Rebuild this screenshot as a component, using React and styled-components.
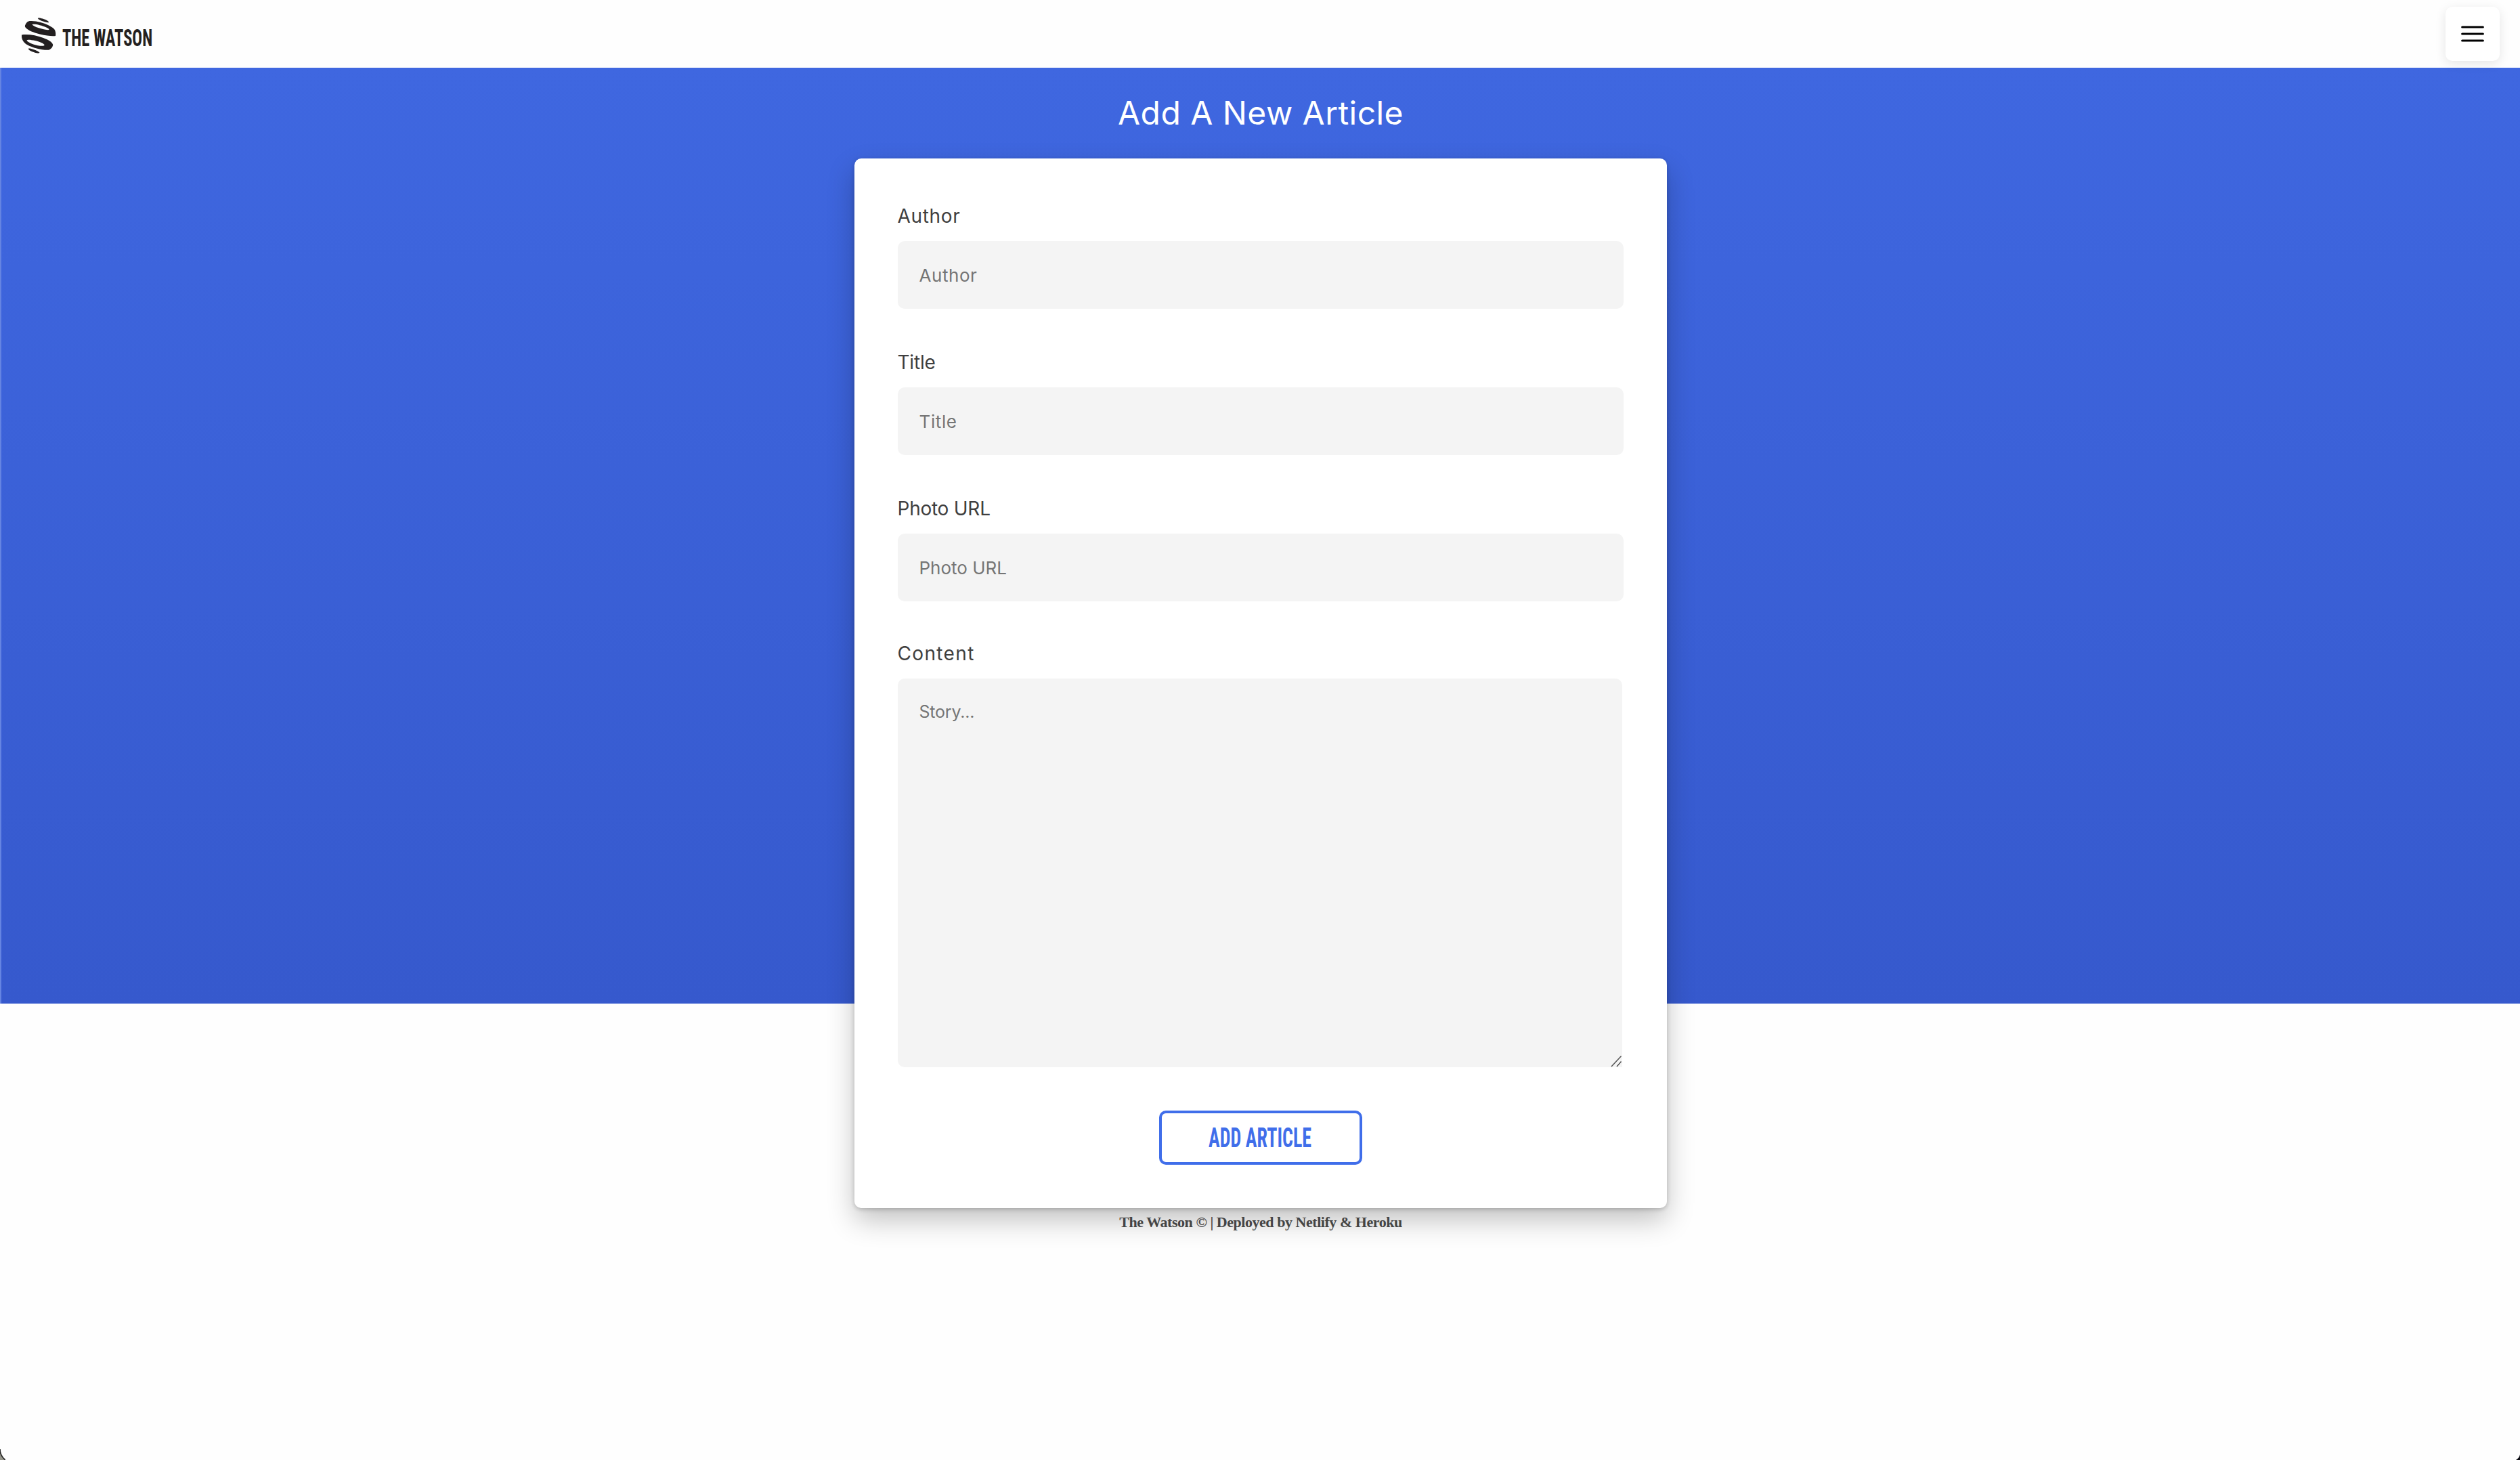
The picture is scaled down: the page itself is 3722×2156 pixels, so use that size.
import React from 'react';
import styled, { createGlobalStyle } from 'styled-components';

const colors = {
  blue: '#406eea',
  ink: '#231f20',
  label: '#3f3f3f',
  field: '#f4f4f4',
  placeholder: '#757575',
};

const GlobalStyle = createGlobalStyle`
  * {
    box-sizing: border-box;
  }
  body {
    margin: 0;
    background: #fefefe;
    font-family: Inter, 'Open Sans', sans-serif;
    overflow: hidden;
  }
`
const Page = styled.div`
  position: relative;
  height: 2156px;
`
const Header = styled.header`
  display: flex;
  justify-content: space-between;
  height: 100px;
  padding: 10px 30px 10px 32px;
`
const Brand = styled.a`
  display: flex;
  align-items: flex-start;
  gap: 9px;
  padding-top: 16px;
  color: ${colors.ink};
`
const Condensed = styled.span`
  display: inline-block;
  font-family: 'Roboto Condensed', Roboto, sans-serif;
  font-stretch: 75%;
  font-weight: 700;
  white-space: nowrap;
  transform: scaleX(${p => p.$squeeze});
  transform-origin: ${p => p.$origin};
`
const BrandName = styled(Condensed)`
  margin-top: 10px;
  font-size: 35px;
  line-height: 41px;
`
const MenuButton = styled.button`
  display: flex;
  align-items: center;
  justify-content: center;
  width: 80px;
  height: 80px;
  padding: 0;
  border: 0;
  border-radius: 10px;
  background: #fff;
  box-shadow: 0 4px 16px rgba(0, 0, 0, 0.1);
`
const Hero = styled.main`
  display: flex;
  flex-direction: column;
  align-items: center;
  height: 1382px;
  border-left: 2px solid #6584e2;
  background: linear-gradient(#3f67e0, #3659cd);
`
const Heading = styled.h1`
  margin: 0;
  color: #fff;
  font-size: 48px;
  font-weight: 400;
  line-height: 134px;
  letter-spacing: 0.45px;
`
const Card = styled.form`
  flex: none;
  width: 1200px;
  height: 1550px;
  margin-right: 1px;
  padding: 64px;
  border-radius: 10px;
  background: #fff;
  box-shadow: 0 2px 6px rgba(0, 0, 0, 0.2), 0 18px 40px rgba(0, 0, 0, 0.24);
`
const Field = styled.div`
  margin-bottom: 58px;

  &:nth-of-type(3) {
    margin-bottom: 56px;
  }
  &:last-of-type {
    margin-bottom: 64px;
  }
`
const Label = styled.label`
  display: block;
  margin-bottom: 17px;
  padding-top: 1px;
  color: ${colors.label};
  font-size: 28px;
  line-height: 40px;
  letter-spacing: ${p => p.$tracking}px;
`
const Input = styled.input`
  display: block;
  width: 1072px;
  height: 100px;
  padding: 0 32px;
  border: 0;
  border-radius: 10px;
  background: ${colors.field};
  font-family: inherit;
  font-size: 26px;
  letter-spacing: ${p => p.$tracking}px;

  &::placeholder {
    color: ${colors.placeholder};
  }
`
const StoryBox = styled.div`
  position: relative;
  width: 1070px;
  height: 574px;
`
const Story = styled(Input)`
  width: 100%;
  height: 100%;
  padding: 32px;
  border-bottom-right-radius: 0;
  font-size: 25px;
  line-height: 34px;
  resize: none;
`
const Grip = styled.svg`
  position: absolute;
  right: 0;
  bottom: 0;
`
const SubmitButton = styled.button`
  display: block;
  width: 300px;
  height: 80px;
  margin: 0 auto;
  padding: 0;
  border: 4px solid ${colors.blue};
  border-radius: 10px;
  background: #fff;
  color: ${colors.blue};
  text-align: center;
`
const ButtonText = styled(Condensed)`
  font-size: 40.5px;
  line-height: 72px;
  margin: -1px -40px 0;
`
const Footer = styled.footer`
  margin-top: 6px;
  color: #444;
  font-family: 'Liberation Serif', serif;
  font-size: 22px;
  font-weight: 700;
  line-height: 30px;
  letter-spacing: -0.46px;
`
const WindowCorner = styled.svg`
  position: absolute;
  bottom: 0;
  ${p => p.$side}: 0;
`

const fields = [
  { name: 'Author', labelTracking: 0.65, tracking: 0.55 },
  { name: 'Title', labelTracking: -0.2, tracking: 0.6 },
  { name: 'Photo URL', labelTracking: -0.25, tracking: 0 },
];

function Logo() {
  return (
    <svg width="51" height="54" viewBox="0 0 51 54" fill={colors.ink}>
      <path d="M24 1.2C23 0 27 .2 31 1.6C36 3.2 40.500 5.600 40 7C39.400 8 34 6.500 30 5C26.500 3.600 24.700 2.400 24 1.200Z" />
      <path fillRule="evenodd" d="M5 11.500C7 7 9 5 13 5C22 4.600 33 8 40 11.500C45 14 48.500 16.500 49.500 19.500C50.600 23 50.300 25.500 50 27C46 27.800 37 27 27 24.500C17 22 9 18.500 6 15C4.800 13.800 4.700 12.500 5 11.500ZM15.500 10.300C18 13.500 29 17.200 39 18.200C42 18.200 40.500 16.500 36.500 14.600C29 11.300 18.500 8.800 15.500 10.300Z" />
      <path fillRule="evenodd" d="M0 25.500C8 24 22 26 32 30C40 33 45.500 36.500 46.200 40C46 44 42.500 48 38 47.800C28 47.800 16 44.500 8 40C2 36.500 -.5 31 0 25.500ZM7.500 33.500C8 36 16 39.600 24 41.200C30 42.200 34.500 42 33.500 40C32 38 26 35.400 20 34.100C14 32.700 8.500 32 7.500 33.500Z" />
      <path d="M10 45.800C9.500 47.500 14 50 19 51.500C23 52.700 26 52.900 26.500 51.800C26 50.500 22 48.500 18 47.200C14 45.900 11 45.200 10 45.800Z" />
    </svg>
  )
}

function MenuIcon() {
  return (
    <svg width="34" height="24" viewBox="0 0 34 24" stroke="#000" strokeWidth="3.200" strokeLinecap="round">
      <path d="M1.700 2H32.300M1.700 12H32.300M1.700 22H32.300" />
    </svg>
  )
}

function App() {
  return (
    <Page>
      <GlobalStyle />
      <Header>
        <Brand>
          <Logo />
          <BrandName $squeeze={0.7} $origin="left">THE WATSON</BrandName>
        </Brand>
        <MenuButton type="button" aria-label="Menu">
          <MenuIcon />
        </MenuButton>
      </Header>
      <Hero>
        <Heading>Add A New Article</Heading>
        <Card>
          {fields.map(({ name, labelTracking, tracking }) => (
            <Field key={name}>
              <Label $tracking={labelTracking}>{name}</Label>
              <Input placeholder={name} $tracking={tracking} />
            </Field>
          ))}
          <Field>
            <Label $tracking={1.35}>Content</Label>
            <StoryBox>
              <Story as="textarea" placeholder="Story..." $tracking={-0.2} />
              <Grip width="17" height="18" stroke="#555" strokeWidth="1.500">
                <path d="M1 17L15.500 1.500M9 17L15.500 9.500" />
              </Grip>
            </StoryBox>
          </Field>
          <SubmitButton type="button">
            <ButtonText $squeeze={0.69} $origin="center">ADD ARTICLE</ButtonText>
          </SubmitButton>
        </Card>
        <Footer>The Watson © | Deployed by Netlify &amp; Heroku</Footer>
      </Hero>
      <WindowCorner $side="left" width="8" height="16">
        <path d="M0 0C0 7 3 12 8 16H0Z" fill="#96968c" />
        <path d="M0 0C0 7 3 12 8 16" fill="none" stroke="#222" strokeWidth="1.500" />
      </WindowCorner>
      <WindowCorner $side="right" width="6" height="8">
        <path d="M6 0C5 4 3 6 0 8H6Z" fill="#0b0b12" />
      </WindowCorner>
    </Page>
  )
}

export default App;
